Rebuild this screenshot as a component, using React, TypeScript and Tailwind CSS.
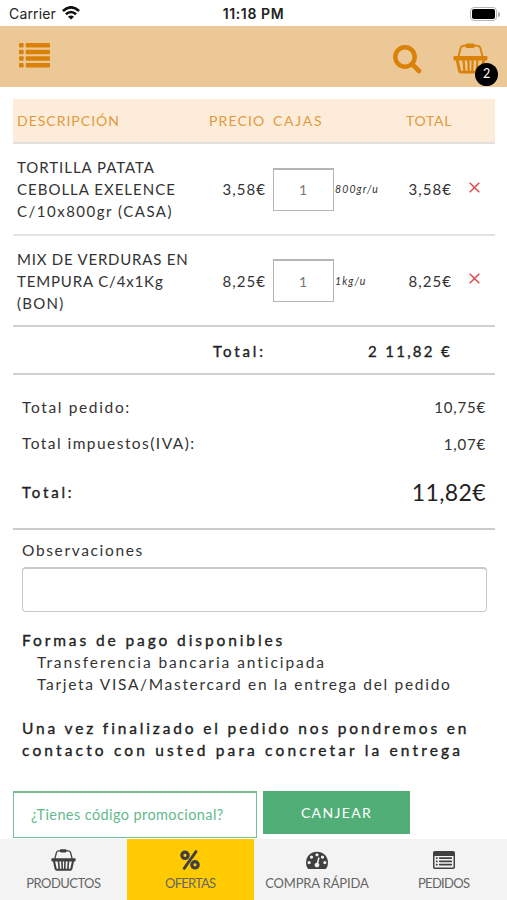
import type { ReactNode } from "react";

type CartLine = { id: string; name: [string, string][]; price: string; qty: number; unit: string; total: string };

// each name line carries its own tracking class
const LINES: CartLine[] = [
  {
    id: "tortilla",
    name: [["TORTILLA PATATA", "tracking-[0.950px]"], ["CEBOLLA EXELENCE", "tracking-[1px]"], ["C/10x800gr (CASA)", "tracking-[1.500px]"]],
    price: "3,58€", qty: 1, unit: "800gr/u", total: "3,58€",
  },
  {
    id: "mix",
    name: [["MIX DE VERDURAS EN", "tracking-[0.780px]"], ["TEMPURA C/4x1Kg", "tracking-[0.850px]"], ["(BON)", "tracking-[1.300px]"]],
    price: "8,25€", qty: 1, unit: "1kg/u", total: "8,25€",
  },
];

function BasketIcon({ className }: { className: string }) {
  return (
    <svg viewBox="0 0 36 31" className={className} fill="none" stroke="currentColor">
      <path d="M5.500 14 7.800 5Q8.500 2.300 11.500 2.300h13q3 0 3.700 2.700L30.500 14" strokeWidth="1.900" />
      <rect x="12.500" y="0" width="10" height="4.600" rx="2" fill="currentColor" stroke="none" />
      <rect x="0.500" y="13" width="35" height="4.500" rx="1.200" fill="currentColor" stroke="none" />
      <path d="m4.300 17 2.400 11.200q.3 1.300 1.500 1.300h19.600q1.200 0 1.500-1.300L31.700 17" strokeWidth="3" />
      <path d="m10.800 17 1 12M15.800 17l.4 12M20.200 17l-.4 12M25.200 17l-1 12" strokeWidth="2.300" />
    </svg>
  );
}

function ListIcon() {
  return (
    <svg viewBox="0 0 31 25" className="h-[25px] w-[31px]" fill="currentColor">
      {[0, 6.700, 13.200, 19.900].map((y) => (
        <g key={y}>
          <rect x="0" y={y} width="4.700" height="4.600" rx="1" />
          <rect x="6.700" y={y} width="24.300" height="4.600" rx="0.800" />
        </g>
      ))}
    </svg>
  );
}

function SearchIcon() {
  return (
    <svg viewBox="0 0 29 29" className="size-[29px]" fill="none" stroke="currentColor">
      <circle cx="12" cy="12" r="9.700" strokeWidth="4.400" />
      <path d="m19.300 19.300 6.700 6.700" strokeWidth="4.600" strokeLinecap="round" />
    </svg>
  );
}

function PercentIcon() {
  return (
    <svg viewBox="0 0 20 20" className="h-[20px] w-[20px]" fill="none" stroke="currentColor">
      <circle cx="5" cy="5.300" r="3.200" strokeWidth="3.200" />
      <circle cx="15" cy="14.800" r="3.200" strokeWidth="3.200" />
      <path d="M16 1.600 4.200 18.400" strokeWidth="2.800" strokeLinecap="round" />
    </svg>
  );
}

function GaugeIcon() {
  return (
    <svg viewBox="0 128 1792 1536" className="h-[19px] w-[22px]" fill="currentColor">
      <path d="M384 1152q0-53-37.500-90.500t-90.500-37.500-90.500 37.500-37.500 90.500 37.500 90.500 90.500 37.500 90.500-37.500 37.500-90.500zm192-448q0-53-37.500-90.500t-90.500-37.500-90.500 37.500-37.500 90.500 37.500 90.500 90.500 37.500 90.500-37.500 37.500-90.500zm428 481l101-382q6-26-7.500-48.500t-38.500-29.500-48 6.500-30 39.500l-101 382q-60 5-107 43.500t-63 98.500q-20 77 20 146t117 89 146-20 89-117q16-60-6-117t-72-91zm660-33q0-53-37.500-90.500t-90.500-37.500-90.500 37.500-37.500 90.500 37.500 90.500 90.500 37.500 90.500-37.500 37.500-90.500zm-640-640q0-53-37.500-90.500t-90.500-37.500-90.500 37.500-37.500 90.500 37.500 90.500 90.500 37.500 90.500-37.500 37.500-90.500zm448 192q0-53-37.500-90.500t-90.500-37.500-90.500 37.500-37.500 90.500 37.500 90.500 90.500 37.500 90.500-37.500 37.500-90.500zm320 448q0 261-141 483-19 29-54 29h-1402q-35 0-54-29-141-221-141-483 0-182 71-348t191-286 286-191 348-71 348 71 286 191 191 286 71 348z" />
    </svg>
  );
}

function OrdersIcon() {
  return (
    <svg viewBox="0 0 22 18" className="h-[18px] w-[22px]" fill="currentColor">
      <path fillRule="evenodd" d="M1.800 0h18.400Q22 0 22 1.800v14.400q0 1.800-1.800 1.800H1.800Q0 18 0 16.200V1.800Q0 0 1.800 0zM1.500 5v11.500h19V5z" />
      {[6.300, 9.500, 12.700].map((y) => (
        <g key={y}>
          <rect x="2.900" y={y} width="1.800" height="1.700" rx="0.400" />
          <rect x="6" y={y} width="13" height="1.700" rx="0.400" />
        </g>
      ))}
    </svg>
  );
}

function StatusBar() {
  return (
    <div className="flex h-[25.500px] items-center bg-white pt-[3px] font-['Inter',sans-serif] text-[#222]">
      <div className="flex w-[200px] items-center gap-[6px] pl-[9px] text-[14px] leading-none">
        <span className="tracking-[0.150px]">Carrier</span>
        <svg viewBox="0 0 18 14" className="mb-[2px] h-[14px] w-[18px]" fill="none" stroke="#111" strokeWidth="2.600">
          <path d="M.9 5q8.100-7.400 16.200 0M3.900 8.300q5.100-4.600 10.200 0" />
          <path d="M9 13.600 6 10.700q3-2.500 6 0z" fill="#111" stroke="none" />
        </svg>
      </div>
      <div className="flex-1 text-center text-[14px] leading-none font-semibold tracking-[0.600px] whitespace-nowrap">11:18 PM</div>
      <div className="flex w-[200px] items-center justify-end gap-[1px] pr-[7px]">
        <div className="h-[14px] w-[27px] rounded-[4px] border-[1.500px] border-[#b5b5b5] p-[1px]">
          <div className="h-full rounded-[2px] bg-black" />
        </div>
        <div className="h-[5px] w-[2px] rounded-r-full bg-[#aaa]" />
      </div>
    </div>
  );
}

function Row({ line }: { line: CartLine }) {
  return (
    <div className="flex h-[91.500px] items-center border-b-2 border-[#e2e2e2] pt-[1px] text-[15px] tracking-[1.050px]">
      <div className="w-[195px] pl-[4px] leading-[22px] whitespace-nowrap">
        {line.name.map(([text, tracking]) => <div key={text} className={tracking}>{text}</div>)}
      </div>
      <div className="w-[58px] text-right">{line.price}</div>
      <div className="ml-[7px] flex h-[43px] w-[61px] items-center justify-center border border-t-2 border-[#b5b5b5] text-[14px] text-[#777]">{line.qty}</div>
      <div className="mt-[2px] w-[60px] pl-[1px] text-[10.500px] italic tracking-[1.100px]">{line.unit}</div>
      <div className="w-[58px] text-right">{line.total}</div>
      <button type="button" aria-label="Eliminar" className="mb-[4px] ml-[17px] text-[#dc4b50]">
        <svg viewBox="0 0 11 11" className="size-[11px]" stroke="currentColor" strokeWidth="1.500"><path d="m.7.7 9.600 9.600M10.300.7.7 10.300" /></svg>
      </button>
    </div>
  );
}

function Tab({ icon, label, tracking, active }: { icon: ReactNode; label: string; tracking: string; active?: boolean }) {
  return (
    <div className={`flex flex-1 flex-col items-center pt-[9px] ${active ? "bg-[#ffcb00]" : ""}`}>
      <div className="flex h-[23px] items-center text-[#404040]">{icon}</div>
      <span className={`mt-[3px] text-[13px] leading-[18px] whitespace-nowrap text-[#666] ${tracking}`}>{label}</span>
    </div>
  );
}

export default function App() {
  return (
    <div className="flex h-[900px] w-[507px] flex-col overflow-hidden bg-white font-['Lato',sans-serif] text-[#333]">
      <StatusBar />
      <header className="flex h-[61px] shrink-0 items-center bg-[#edc897] text-[#d98109]">
        <div className="mb-[2px] ml-[19px]"><ListIcon /></div>
        <div className="mt-[7px] ml-auto"><SearchIcon /></div>
        <div className="relative mr-[19px] ml-[31px]">
          <BasketIcon className="mt-[4px] h-[31px] w-[35px]" />
          <span className="absolute top-[24px] left-[22px] flex size-[23px] items-center justify-center rounded-full bg-black text-[12.500px] text-white">2</span>
        </div>
      </header>

      <main className="flex-1 pt-[12px] pr-[12px] pl-[13px]">
        <div className="flex h-[45.500px] items-center border-b-2 border-[#e2dfdd] bg-[#feecda] text-[14px] text-[#e09a3c]">
          <div className="w-[196px] pl-[4px] tracking-[1px]">DESCRIPCIÓN</div>
          <div className="w-[64px] tracking-[1.150px]">PRECIO</div>
          <div className="w-[133px] tracking-[1.700px]">CAJAS</div>
          <div className="tracking-[0.700px]">TOTAL</div>
        </div>
        {LINES.map((l) => <Row key={l.id} line={l} />)}
        <div className="-mt-[2px] flex h-[50px] items-center border-t-2 border-b-2 border-[#d0d0d0] pt-[2px] text-[15px] text-[#222] [-webkit-text-stroke:0.350px]">
          <span className="w-[355px] pl-[200px] tracking-[2.900px]">Total:</span>
          <span className="tracking-[2.300px]">2 11,82 €</span>
        </div>

        <div className="h-[155px] border-b-2 border-[#ccc] px-[9px] pt-[14px]">
          <div className="flex h-[36.500px] items-center justify-between">
            <span className="text-[15.500px] tracking-[1.650px]">Total pedido:</span>
            <span className="text-[15px] tracking-[0.800px]">10,75€</span>
          </div>
          <div className="flex h-[36.500px] items-center justify-between">
            <span className="text-[15.500px] tracking-[1.450px]">Total impuestos(IVA):</span>
            <span className="text-[15px] tracking-[0.800px]">1,07€</span>
          </div>
          <div className="flex h-[61px] items-center justify-between text-[#222]">
            <span className="text-[15px] tracking-[2.800px] [-webkit-text-stroke:0.350px]">Total:</span>
            <span className="text-[23px] tracking-[0.400px]">11,82€</span>
          </div>
        </div>

        <div className="px-[9px] pt-[9px] text-[15.500px] leading-[22px]">
          <label className="block tracking-[1.650px]">Observaciones</label>
          <div className="mt-[6px] h-[45px] w-[465px] rounded-[4px] border border-t-2 border-[#c8c8c8]" />
          <div className="mt-[17px] tracking-[2.900px] text-[#222] [-webkit-text-stroke:0.350px]">Formas de pago disponibles</div>
          <ul className="pl-[15px] whitespace-nowrap">
            <li className="tracking-[1.940px]">Transferencia bancaria anticipada</li>
            <li className="tracking-[1.690px]">Tarjeta VISA/Mastercard en la entrega del pedido</li>
          </ul>
          <div className="mt-[22px] whitespace-nowrap text-[#222] [-webkit-text-stroke:0.350px]">
            <p className="tracking-[2.850px]">Una vez finalizado el pedido nos pondremos en</p>
            <p className="tracking-[3.150px]">contacto con usted para concretar la entrega</p>
          </div>
        </div>

        <div className="mt-[30px] flex items-start gap-[6px]">
          <div className="flex h-[47px] w-[244px] items-center border-[1.500px] border-t-2 border-[#78bd95] pl-[17px] text-[14.500px] tracking-[0.400px] text-[#63b98b]">¿Tienes código promocional?</div>
          <button type="button" className="h-[43px] w-[147px] bg-[#52ae77] text-[14px] tracking-[1.350px] text-white">CANJEAR</button>
        </div>
      </main>

      <nav className="flex h-[61px] shrink-0 bg-[#f3f3f3]">
        <Tab icon={<BasketIcon className="h-[22px] w-[25px]" />} label="PRODUCTOS" tracking="tracking-[-0.550px]" />
        <Tab icon={<PercentIcon />} label="OFERTAS" tracking="tracking-[-0.800px]" active />
        <Tab icon={<GaugeIcon />} label="COMPRA RÁPIDA" tracking="tracking-[-0.150px]" />
        <Tab icon={<OrdersIcon />} label="PEDIDOS" tracking="tracking-[-0.700px]" />
      </nav>
    </div>
  );
}
